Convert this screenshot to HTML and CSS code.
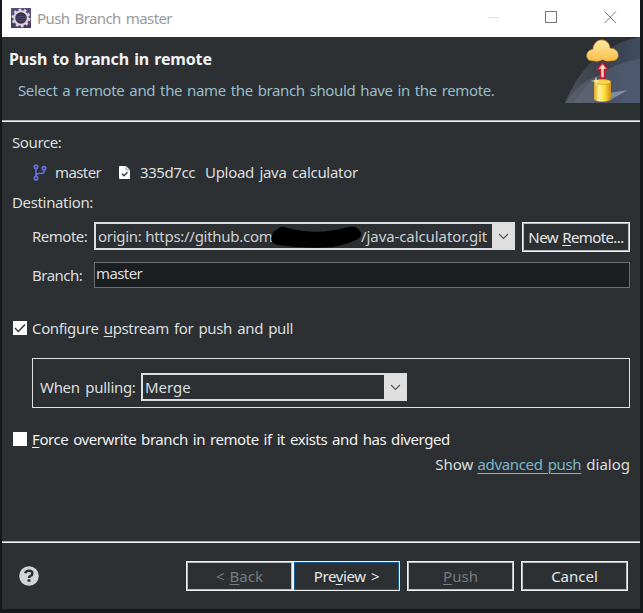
FILE: index.html
```html
<!DOCTYPE html>
<html lang="en">
<head>
<meta charset="utf-8">
<title>Push Branch master</title>
<link rel="stylesheet" href="styles.css">
</head>
<body>
<main class="dialog">
  <div class="titlebar">
    <svg class="app-icon" width="20" height="20" viewBox="0 0 20 20">
      <rect width="20" height="20" fill="#5b4b7d"/>
      <path d="M0 20V9l20 6v5z" fill="#473868"/>
      <circle cx="10" cy="10" r="8.2" fill="none" stroke="#dcd8da" stroke-width="2.5" stroke-dasharray="2.6 2.55"/>
      <circle cx="10" cy="10" r="6.8" fill="#373250" stroke="#dcd8da" stroke-width="2"/>
      <path d="M5.500 8.500h9M5 10.500h10M5.500 12.500h9" stroke="#57506f" stroke-width=".8"/>
    </svg>
    <span class="window-title">Push Branch master</span>
    <svg class="window-controls" width="132" height="20" viewBox="0 0 132 20" fill="none">
      <path d="M0 9.5h11" stroke="#dedede"/>
      <rect x="57.500" y="3.500" width="11" height="11" stroke="#777"/>
      <path d="M116.500 3.500l11.500 11.500m0-11.500l-11.500 11.500" stroke="#777"/>
    </svg>
  </div>
  <header class="banner">
    <div class="banner-copy">
      <h1>Push to branch in remote</h1>
      <p><span class="t-select">Select a remote and the name the branch should have in the remote.</span></p>
    </div>
    <svg class="banner-art" width="75" height="66" viewBox="0 0 75 66">
      <defs>
        <linearGradient id="sweep" x1="0" x2="1"><stop stop-color="#555b64"/><stop offset=".5" stop-color="#3c434f"/><stop offset="1" stop-color="#46536d"/></linearGradient>
        <linearGradient id="gold" x1="0" x2="1"><stop stop-color="#dda81c"/><stop offset=".3" stop-color="#fff2a0"/><stop offset=".65" stop-color="#f8d837"/><stop offset="1" stop-color="#c98a10"/></linearGradient>
        <linearGradient id="cloud" x1="0" y1="0" x2="0" y2="1"><stop stop-color="#ffeaa5"/><stop offset="1" stop-color="#f9bd49"/></linearGradient>
      </defs>
      <path d="M0 66C14 32 38 7 75 0v66z" fill="url(#sweep)" opacity=".8"/>
      <path d="M8 66C24 42 44 26 75 22v44z" fill="#56617a" opacity=".65"/>
      <path d="M0 66C9 53 18 44 30 40v26z" fill="#656b75" opacity=".5"/>
      <path d="M44 56l19-3-18 10z" fill="#909aac" opacity=".8"/>
      <path d="M27 23.500C20 24 20 13 28 12.500 29 0 44 0 45 11.500 55 11 56 24 47 23.500Q42 25 37.500 22.500 33 25.500 27 23.500z" fill="url(#cloud)" stroke="#eea52c" stroke-width=".7"/>
      <path d="M37.500 26l5.500 6.500h-3.500v8.500h-4v-8.500H32z" fill="#ffd9d5" stroke="#c51b28" stroke-width="1.600"/>
      <path d="M29 45c0-3.500 17-3.500 17 0v17c0 3.500-17 3.500-17 0z" fill="url(#gold)"/>
      <ellipse cx="37.500" cy="45" rx="8.300" ry="2.500" fill="#f7d64a" stroke="#cf9617" stroke-width=".6"/>
      <path d="M31 39l.8 4.200L36 44l-4.200.8L31 49l-.8-4.200L26 44l4.200-.8z" fill="#fff1b8"/>
    </svg>
  </header>
  <section class="form">
    <div class="caption"><span class="tight">Source:</span></div>
    <div class="source">
      <svg class="branch-icon" width="14" height="17" viewBox="0 0 14 17" fill="none" stroke="#6671e6" stroke-width="1.600">
        <circle cx="3" cy="2.800" r="1.700"/><circle cx="3" cy="14.200" r="1.700"/><circle cx="11" cy="4.300" r="1.700"/>
        <path d="M3 4.500v8M11 6v1.500Q11 9.500 8.500 9.500H6Q3 9.500 3 12"/>
      </svg>
      <span class="t-master">master</span>
      <svg class="commit-icon" width="11" height="13" viewBox="0 0 11 13">
        <path d="M1 0h6l4 4v9H1Q0 13 0 12V1Q0 0 1 0z" fill="#fff"/><path d="M7 0v4h4" fill="none" stroke="#80868a" stroke-width=".8"/>
        <path d="M3 7.800l2 2 3.500-3.500" fill="none" stroke="#30363a" stroke-width="1.400"/>
      </svg>
      <span class="hash">335d7cc</span><span class="subject">Upload java calculator</span>
    </div>
    <div class="caption destination"><span class="t-destination">Destination:</span></div>
    <div class="field remote">
      <label><span class="t-label">Remote:</span></label>
      <div class="combo remote-combo">
        <span class="t-origin">origin: https://github.com</span>
        <svg class="redaction" width="92" height="24" viewBox="0 0 92 24"><path d="M7 4Q10 0 17 3 47 11 77 2 85 0 88 5 93 10 87 14 75 20 61 22 34 24 7 20-2 18 1 10 2 6 7 4z" fill="#000"/></svg>
        <span class="t-repo">/java-calculator.git</span>
        <span class="arrow"><svg width="11" height="7" viewBox="0 0 11 7"><path d="M1 1l4.500 4.500L10 1" fill="none" stroke="#555" stroke-width="1.200"/></svg></span>
      </div>
      <button class="button new-remote"><span class="t-new">New <u>R</u>emote...</span></button>
    </div>
    <div class="field branch">
      <label><span class="t-label">Branch:</span></label>
      <div class="input"><span class="t-master">master</span></div>
    </div>
    <div class="check configure">
      <span class="box"><svg width="14" height="14" viewBox="0 0 14 14"><path d="M2 7l3.300 3.500L12 3.500" fill="none" stroke="#333" stroke-width="1.400"/></svg></span>
      <span class="t-configure">Configure <u>u</u>pstream for push and pull</span>
    </div>
    <div class="group">
      <span class="t-when">When pulling:</span>
      <div class="combo merge-combo"><span class="t-merge">Merge</span><span class="arrow"><svg width="11" height="7" viewBox="0 0 11 7"><path d="M1 1l4.500 4.500L10 1" fill="none" stroke="#555" stroke-width="1.200"/></svg></span></div>
    </div>
    <div class="check force"><span class="box"></span><span class="t-force"><u>F</u>orce overwrite branch in remote if it exists and has diverged</span></div>
    <div class="advanced"><span>Show</span><a class="t-advanced">advanced push</a><span>dialog</span></div>
  </section>
  <footer class="actions">
    <svg class="help" width="20" height="20" viewBox="0 0 20 20"><circle cx="10" cy="10" r="9.800" fill="#d2d3d4"/><path d="M6.300 7.300Q6.800 4.800 10 4.800 13.400 4.800 13.400 7.400 13.400 9 11.500 9.800 10 10.500 10 12" fill="none" stroke="#2b3033" stroke-width="2.500"/><rect x="8.600" y="13.300" width="2.800" height="2.500" fill="#2b3033"/></svg>
    <button class="button disabled"><span class="t-back">&lt; <u>B</u>ack</span></button>
    <button class="button primary"><span class="t-preview">Pre<u>v</u>iew &gt;</span></button>
    <button class="button disabled spaced"><span><u>P</u>ush</span></button>
    <button class="button spaced"><span>Cancel</span></button>
  </footer>
</main>
</body>
</html>
```
FILE: styles.css
```css
* { box-sizing: border-box; }
body { margin: 0; width: 643px; height: 613px; overflow: hidden; background: #17181c; font: 15px/20px "Noto Sans", sans-serif; color: #dcdedf; }
svg { display: block; flex: none; }
span, a { white-space: nowrap; }
u { text-decoration-thickness: 1px; text-underline-offset: 2px; }
.dialog { width: 638px; height: 609px; margin-left: 2px; background: #2c3033; display: flex; flex-direction: column; }
.titlebar { height: 37px; background: #fff; display: flex; align-items: center; padding: 0 20px 1px 9px; flex: none; }
.window-title { margin-left: 6px; color: #999; letter-spacing: -.6px; word-spacing: 1.8px; }
.window-controls { margin-left: auto; }
.banner { height: 85px; flex: none; display: flex; justify-content: space-between; border-bottom: 1px solid #f5f6f6; box-shadow: inset 0 -1px #a9acae; }
.banner-copy { padding: 12px 0 0 7px; }
h1 { margin: 0; font-size: 16px; line-height: 20px; letter-spacing: -.15px; word-spacing: 1.2px; color: #f1f2f3; }
.banner p { margin: 11px 0 0 9px; line-height: 20px; color: #99bdc9; }
.t-select { letter-spacing: -.37px; word-spacing: 1.4px; }
.form { height: 419px; flex: none; padding: 10px 10px 0; }
.caption { height: 20px; }
.tight { letter-spacing: -.4px; }
.source { display: flex; align-items: center; height: 20px; margin-top: 10px; padding-left: 21px; }
.t-master { letter-spacing: -.6px; }
.source .t-master { margin-left: 8px; width: 64px; }
.hash { margin-left: 10px; width: 65px; letter-spacing: -.4px; }
.subject { letter-spacing: -.3px; word-spacing: 1.8px; }
.destination { margin-top: 10px; }
.t-destination { letter-spacing: -.35px; }
.field { display: flex; }
.field label { width: 62px; margin-left: 20px; line-height: 29px; flex: none; }
.t-label { letter-spacing: -.5px; }
.remote { height: 30px; margin-top: 10px; }
.combo { height: 28px; display: flex; align-items: center; border: 2px solid #dcdfe1; border-right-width: 1px; padding-left: 2px; }
.remote-combo { width: 421px; color: #ced1d3; }
.t-origin { letter-spacing: -.28px; width: 175px; }
.t-repo { letter-spacing: -.08px; }
.redaction { margin: 2px -2px 0 -2px; position: relative; }
.arrow { width: 22px; height: 24px; background: #e0e0e0; margin-left: auto; display: flex; align-items: center; justify-content: center; }
.button { width: 107px; height: 30px; border: 1px solid #f0f3f4; box-shadow: inset 0 0 0 1px #b8bdc0; background: #2c3033; color: #e7e8e9; font: inherit; padding: 0 0 1px; border-radius: 0; }
.new-remote { width: 108px; margin-left: 7px; }
.t-new { letter-spacing: -.6px; word-spacing: 1px; }
.branch { margin-top: 10px; height: 26px; }
.branch label { line-height: 27px; }
.input { flex: 1; border: 1px solid #686d70; background: #1b1f22; padding-left: 1px; line-height: 21px; }
.check { height: 20px; display: flex; align-items: center; padding-left: 1px; }
.box { width: 14px; height: 14px; background: #fff; margin-right: 5px; }
.configure { margin-top: 30px; }
.t-configure { letter-spacing: -.35px; word-spacing: 1.6px; }
.group { display: flex; align-items: center; height: 50px; margin: 20px 0 0 20px; border: 1px solid #dfe1e2; padding: 8px 0 0 7px; }
.t-when { width: 101px; letter-spacing: -.3px; word-spacing: 2px; }
.merge-combo { width: 266px; }
.force { margin-top: 21px; color: #f1f1f1; }
.t-force { letter-spacing: -.42px; word-spacing: 1.4px; }
.advanced { display: flex; justify-content: flex-end; gap: 4px; margin-top: 5px; height: 20px; }
.advanced a { color: #7bb6c9; letter-spacing: -.33px; word-spacing: 1.5px; margin-right: 1px; text-decoration: underline; text-decoration-thickness: 1px; text-underline-offset: 3px; }
.actions { height: 68px; flex: none; display: flex; align-items: center; border-top: 1px solid #a9acae; box-shadow: inset 0 1px #f5f6f6; padding: 1px 12px 0 17px; }
.actions .button:nth-of-type(1) { margin-left: auto; }
.actions .spaced { margin-left: 7px; }
.actions .disabled { color: #777b7e; }
.t-back { word-spacing: 1px; }
.t-preview { letter-spacing: -.4px; word-spacing: 2px; }
.actions .primary { box-shadow: inset 0 0 0 1px #145c9b; }
```
